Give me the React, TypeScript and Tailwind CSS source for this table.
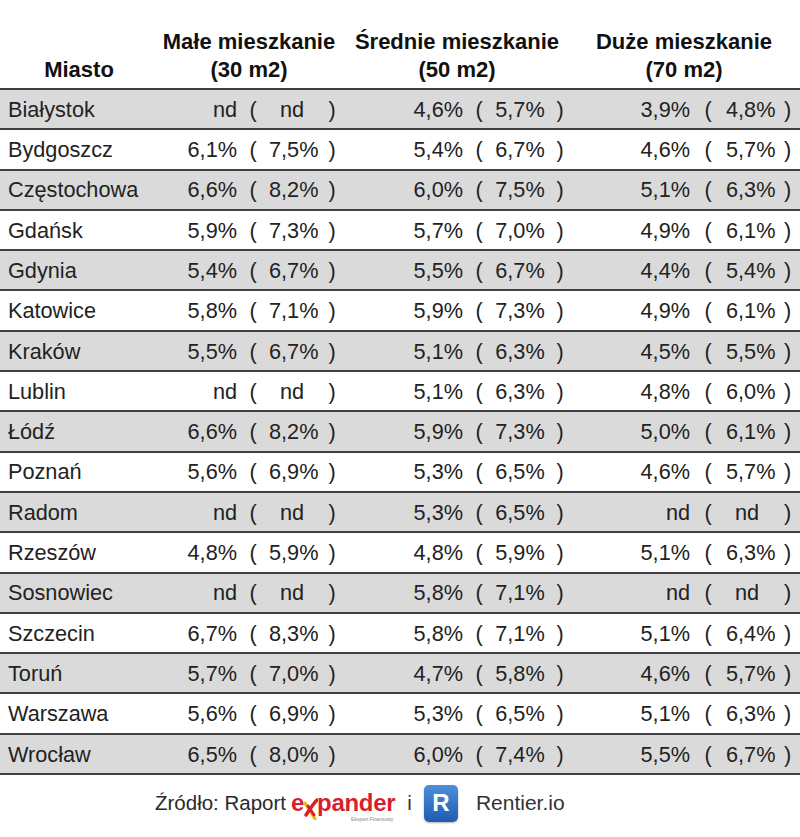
import React from "react";

type Row = [string, string, string, string, string, string, string];

const rows: Row[] = [
  ["Białystok", "nd", "nd", "4,6%", "5,7%", "3,9%", "4,8%"],
  ["Bydgoszcz", "6,1%", "7,5%", "5,4%", "6,7%", "4,6%", "5,7%"],
  ["Częstochowa", "6,6%", "8,2%", "6,0%", "7,5%", "5,1%", "6,3%"],
  ["Gdańsk", "5,9%", "7,3%", "5,7%", "7,0%", "4,9%", "6,1%"],
  ["Gdynia", "5,4%", "6,7%", "5,5%", "6,7%", "4,4%", "5,4%"],
  ["Katowice", "5,8%", "7,1%", "5,9%", "7,3%", "4,9%", "6,1%"],
  ["Kraków", "5,5%", "6,7%", "5,1%", "6,3%", "4,5%", "5,5%"],
  ["Lublin", "nd", "nd", "5,1%", "6,3%", "4,8%", "6,0%"],
  ["Łódź", "6,6%", "8,2%", "5,9%", "7,3%", "5,0%", "6,1%"],
  ["Poznań", "5,6%", "6,9%", "5,3%", "6,5%", "4,6%", "5,7%"],
  ["Radom", "nd", "nd", "5,3%", "6,5%", "nd", "nd"],
  ["Rzeszów", "4,8%", "5,9%", "4,8%", "5,9%", "5,1%", "6,3%"],
  ["Sosnowiec", "nd", "nd", "5,8%", "7,1%", "nd", "nd"],
  ["Szczecin", "6,7%", "8,3%", "5,8%", "7,1%", "5,1%", "6,4%"],
  ["Toruń", "5,7%", "7,0%", "4,7%", "5,8%", "4,6%", "5,7%"],
  ["Warszawa", "5,6%", "6,9%", "5,3%", "6,5%", "5,1%", "6,3%"],
  ["Wrocław", "6,5%", "8,0%", "6,0%", "7,4%", "5,5%", "6,7%"],
];

const font = { fontFamily: '"Liberation Sans", Arial, sans-serif' };

export default function App() {
  return (
    <div className="w-[800px] h-[837px] bg-white text-[#222] overflow-hidden" style={font}>
      {/* header */}
      <div className="grid grid-cols-[158px_182px_234px_220px] h-[88px] items-end pb-[4px] font-bold text-[22px] leading-[28px] text-[#111] text-center">
        <div>Miasto</div>
        <div>
          Małe mieszkanie
          <br />
          (30 m2)
        </div>
        <div>
          Średnie mieszkanie
          <br />
          (50 m2)
        </div>
        <div>
          Duże mieszkanie
          <br />
          (70 m2)
        </div>
      </div>

      {/* rows */}
      <div className="border-b-2 border-[#404040]">
        {rows.map((r, i) => (
          <div
            key={r[0]}
            className={`grid grid-cols-[158px_79px_32px_46px_34px_114px_32px_50px_30px_115px_36px_42px_32px] h-[40.3px] items-center border-t-2 border-[#404040] text-[21.7px] leading-none pt-[1px] ${
              i % 2 === 0 ? "bg-[#dadada]" : "bg-white"
            }`}
          >
            <div className="pl-[8px]">{r[0]}</div>
            <div className="text-right">{r[1]}</div>
            <div className="text-center">(</div>
            <div className="text-center">{r[2]}</div>
            <div className="text-center">)</div>
            <div className="text-right">{r[3]}</div>
            <div className="text-center">(</div>
            <div className="text-center">{r[4]}</div>
            <div className="text-center">)</div>
            <div className="text-right">{r[5]}</div>
            <div className="text-center">(</div>
            <div className="text-center">{r[6]}</div>
            <div className="text-left pl-[16px]">)</div>
          </div>
        ))}
      </div>

      {/* footer */}
      <div className="flex items-center h-[56px] pl-[155px] text-[20.5px] text-[#2a2a2a]">
        <span>Źródło: Raport</span>
        <span className="ml-[5px] flex flex-col items-end mt-[6px]">
          <span className="flex items-end font-bold text-[24px] leading-[26px] text-[#d81f2c] tracking-[-0.3px]">
            <span>e</span>
            <svg width="14" height="22" viewBox="0 0 14 22" className="mb-[-4px] mx-[-0.5px]">
              <path d="M1 5 L11 21" stroke="#f5b800" strokeWidth="3.2" strokeLinecap="round" fill="none" />
              <path d="M13 2 C9 6 6 11 2 17" stroke="#d81f2c" strokeWidth="3.4" strokeLinecap="round" fill="none" />
              <path d="M4 8 L10 17" stroke="#d81f2c" strokeWidth="3" strokeLinecap="round" fill="none" />
            </svg>
            <span>pander</span>
          </span>
          <span className="text-[5px] leading-none text-[#888] mt-[1px] mr-[2px]">Ekspert Finansowy</span>
        </span>
        <span className="ml-[12px] text-[#333]">i</span>
        <span className="ml-[12px] w-[34px] h-[37px] rounded-[5px] bg-gradient-to-b from-[#4d8fdc] to-[#1f5cb0] flex items-center justify-center text-white font-bold text-[24px] shadow-[0_1px_2px_rgba(0,0,0,0.3)]">
          R
        </span>
        <span className="ml-[18px] text-[21px] text-[#333]">Rentier.io</span>
      </div>
    </div>
  );
}
